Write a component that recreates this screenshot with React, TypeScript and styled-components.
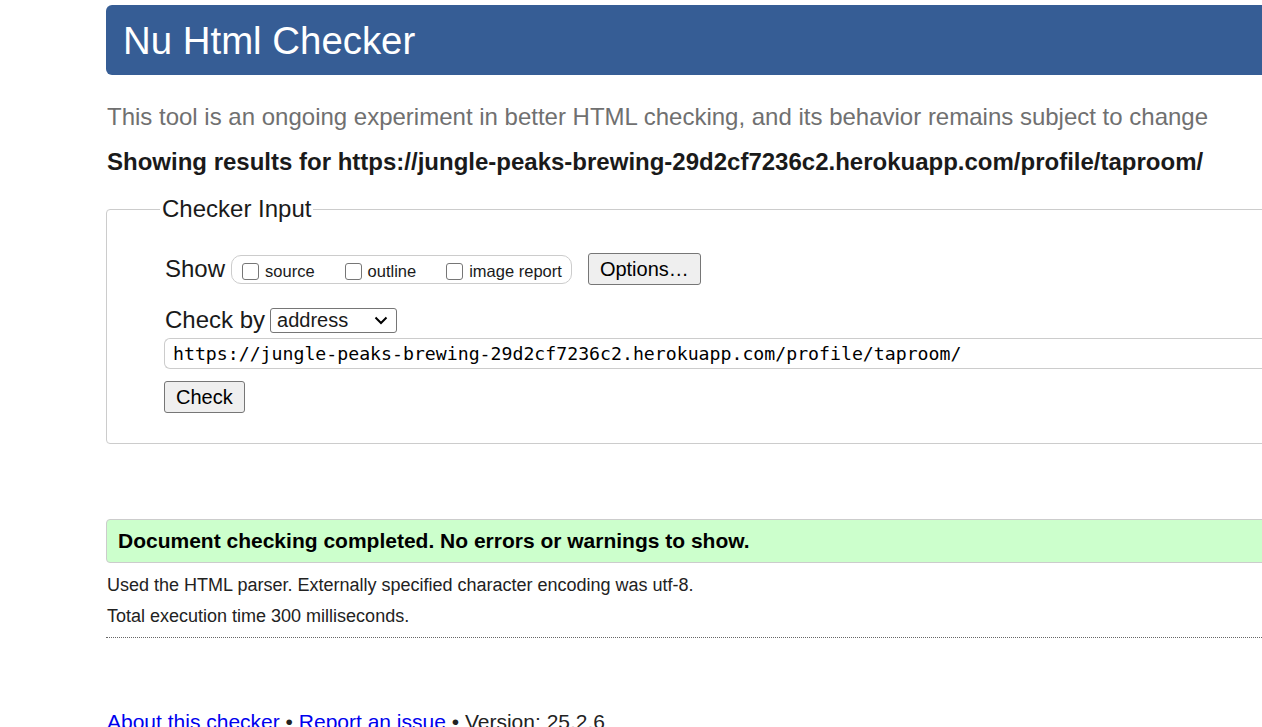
import { createGlobalStyle, styled } from "styled-components";

const GlobalStyle = createGlobalStyle`
  html, body {
    margin: 0;
    padding: 0;
    background: #fff;
    overflow: hidden;
  }
  body {
    font-family: "Liberation Sans", Arial, sans-serif;
    color: #1a1a1a;
  }
`;

const Page = styled.div`
  width: 1320px;
  margin-left: 106px;
  padding-top: 5px;
`;

const Header = styled.h1`
  margin: 0;
  height: 70px;
  display: flex;
  align-items: center;
  padding: 2px 0 0 17px;
  box-sizing: border-box;
  background: #365d95;
  color: #fff;
  font-size: 38.4px;
  font-weight: 400;
  border-radius: 6px 0 0 6px;
`;

const Intro = styled.p`
  margin: 28px 0 0 1px;
  font-size: 24px;
  color: #707070;
`;

const ResultsFor = styled.p`
  margin: 17px 0 0 1px;
  font-size: 24px;
  font-weight: 700;
`;

const Fieldset = styled.fieldset`
  margin: 19px 0 0;
  padding: 0 0 30px 57px;
  border: 1px solid #cccccc;
  border-radius: 4px;
  min-width: 0;
`;

const Legend = styled.legend`
  margin-left: -4px;
  padding: 0 2px;
  font-size: 24px;
`;

const Row = styled.div<{ $top: number }>`
  display: flex;
  align-items: center;
  margin: ${({ $top }) => $top}px 0 0 1px;
  font-size: 24px;
`;

const Group = styled.div`
  display: flex;
  align-items: center;
  height: 27px;
  margin-left: 6px;
  padding: 0 9px 0 10px;
  border: 1px solid #cccccc;
  border-radius: 10px;
  gap: 30px;
`;

const Check = styled.label`
  display: flex;
  align-items: center;
  font-size: 16.5px;
  gap: 6px;

  span {
    margin-top: 5px;
  }
`;

const Box = styled.span`
  width: 17px;
  height: 17px;
  box-sizing: border-box;
  border: 1px solid #767676;
  border-radius: 3px;
  background: #fff;
  margin-top: -5px;
`;

const Button = styled.button<{ $top?: number }>`
  margin-top: ${({ $top }) => $top ?? 0}px;
  font-family: inherit;
  font-size: 20px;
  color: #000;
  background: #efefef;
  border: 1px solid #767676;
  border-radius: 3px;
  padding: 0 11px;
  height: 32px;
`;

const OptionsButton = styled(Button)`
  margin-left: 16px;
  width: 113px;
`;

const Select = styled.div`
  position: relative;
  display: flex;
  align-items: center;
  width: 127px;
  height: 25px;
  margin-left: 5px;
  box-sizing: border-box;
  border: 1px solid #767676;
  border-radius: 3px;
  font-size: 20px;
  padding-left: 6px;

  svg {
    position: absolute;
    right: 8px;
    top: 7px;
  }
`;

const Address = styled.div`
  margin-top: 4px;
  height: 31px;
  box-sizing: border-box;
  border: 1px solid #cccccc;
  border-right: none;
  border-radius: 6px 0 0 6px;
  display: flex;
  align-items: center;
  padding-left: 8px;
  font-family: "DejaVu Sans Mono", "Liberation Mono", monospace;
  font-size: 18.2px;
  color: #000;
`;

const Success = styled.div`
  margin-top: 75px;
  height: 44px;
  box-sizing: border-box;
  display: flex;
  align-items: center;
  padding-left: 11px;
  background: #ccffcc;
  border: 1px solid #cccccc;
  border-radius: 4px;
  font-size: 21px;
  font-weight: 700;
  color: #000;
`;

const Info = styled.p<{ $top: number }>`
  margin: ${({ $top }) => $top}px 0 0 1px;
  font-size: 18px;
  color: #222;
`;

const Rule = styled.hr`
  margin: 10px 0 0;
  border: none;
  border-top: 1px dotted #666;
`;

const Footer = styled.p`
  margin: 72px 0 0 1px;
  font-size: 21px;
  color: #222;

  a {
    color: #0000ee;
    text-decoration: underline;
  }
`;

export default function App() {
  return (
    <>
      <GlobalStyle />
      <Page>
        <Header>Nu Html Checker</Header>
        <Intro>
          This tool is an ongoing experiment in better HTML checking, and its behavior remains subject to change
        </Intro>
        <ResultsFor>
          Showing results for https://jungle-peaks-brewing-29d2cf7236c2.herokuapp.com/profile/taproom/
        </ResultsFor>
        <Fieldset>
          <Legend>Checker Input</Legend>
          <Row $top={30}>
            Show
            <Group>
              <Check>
                <Box />
                <span>source</span>
              </Check>
              <Check>
                <Box />
                <span>outline</span>
              </Check>
              <Check>
                <Box />
                <span>image report</span>
              </Check>
            </Group>
            <OptionsButton>Options…</OptionsButton>
          </Row>
          <Row $top={21}>
            Check by
            <Select>
              address
              <svg width="14" height="9" viewBox="0 0 14 9">
                <path d="M1.5 1.5 L7 7 L12.5 1.5" fill="none" stroke="#000" strokeWidth="2" />
              </svg>
            </Select>
          </Row>
          <Address>https://jungle-peaks-brewing-29d2cf7236c2.herokuapp.com/profile/taproom/</Address>
          <Button $top={12}>Check</Button>
        </Fieldset>
        <Success>Document checking completed. No errors or warnings to show.</Success>
        <Info $top={12}>Used the HTML parser. Externally specified character encoding was utf-8.</Info>
        <Info $top={10}>Total execution time 300 milliseconds.</Info>
        <Rule />
        <Footer>
          <a href="#">About this checker</a> • <a href="#">Report an issue</a> • Version: 25.2.6
        </Footer>
      </Page>
    </>
  );
}
